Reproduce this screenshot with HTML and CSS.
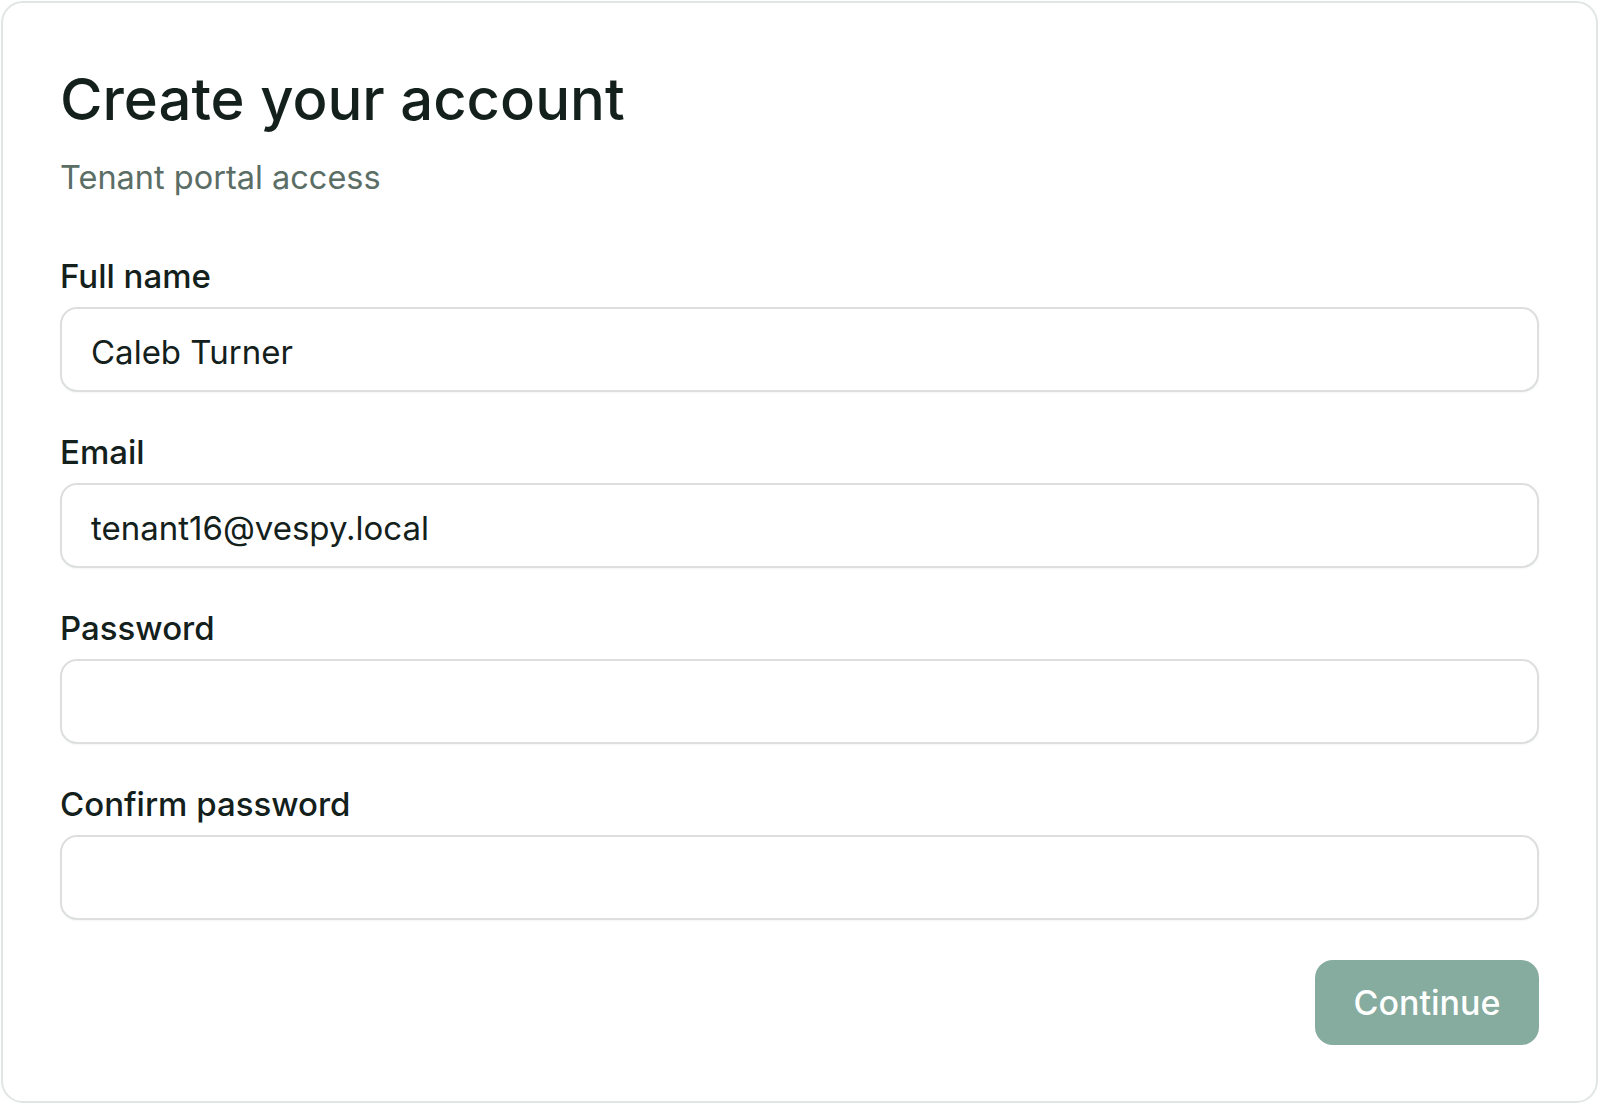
FILE: index.html
```html
<!DOCTYPE html>
<html lang="en">
<head>
<meta charset="utf-8">
<title>Create your account</title>
<link rel="stylesheet" href="styles.css">
</head>
<body>
<main class="card">
  <h1 class="title">Create your account</h1>
  <p class="subtitle">Tenant portal access</p>
  <form class="form">
    <label class="field">
      <span class="label">Full name</span>
      <input class="input" type="text" value="Caleb Turner">
    </label>
    <label class="field">
      <span class="label">Email</span>
      <input class="input" type="email" value="tenant16@vespy.local">
    </label>
    <label class="field">
      <span class="label">Password</span>
      <input class="input" type="password" value="">
    </label>
    <label class="field">
      <span class="label">Confirm password</span>
      <input class="input" type="password" value="">
    </label>
    <div class="actions">
      <button class="btn" type="button">Continue</button>
    </div>
  </form>
</main>
</body>
</html>
```

FILE: styles.css
```css
* { box-sizing: border-box; }
html, body { height: 100%; }
body {
  margin: 0;
  padding: 1px 2px 2px 1px;
  background: #ffffff;
  font-family: Inter, "Noto Sans", "Liberation Sans", sans-serif;
  color: #13201b;
}
.card {
  height: 100%;
  border: 2px solid #e1e6e3;
  border-radius: 22px;
  background: #ffffff;
  padding: 61px 57px 0 57px;
  display: flex;
  flex-direction: column;
}
.title {
  margin: 0;
  font-size: 58px;
  line-height: 70px;
  font-weight: 500;
  letter-spacing: 0;
  color: #13201b;
}
.subtitle {
  margin: 24px 0 0 0;
  font-size: 32.5px;
  line-height: 40px;
  font-weight: 400;
  color: #5b6e66;
}
.form {
  display: flex;
  flex-direction: column;
  gap: 40px;
  margin-top: 58px;
}
.field {
  display: flex;
  flex-direction: column;
  gap: 11px;
}
.label {
  font-size: 33px;
  line-height: 40px;
  font-weight: 500;
  color: #13201b;
}
.input {
  width: 100%;
  height: 85px;
  border: 2px solid #dcdfde;
  border-radius: 17px;
  background: #ffffff;
  padding: 4px 29px 0 29px;
  font-family: inherit;
  font-size: 33px;
  color: #13201b;
  box-shadow: 0 1px 2px rgba(0,0,0,0.04);
  outline: none;
}
.actions {
  display: flex;
  justify-content: flex-end;
  margin-top: 0;
}
.btn {
  width: 224px;
  height: 85px;
  border: none;
  border-radius: 18px;
  background: #86ab9f;
  color: #ffffff;
  font-family: inherit;
  font-size: 34px;
  font-weight: 500;
}
```
